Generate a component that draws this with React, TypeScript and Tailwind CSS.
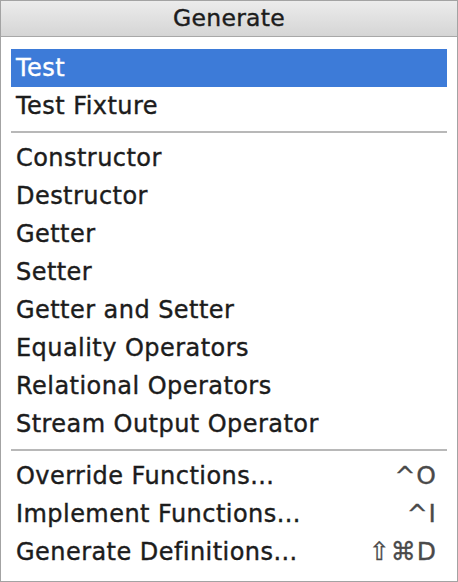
import React from "react";

type Item = { label: string; shortcut?: string; selected?: boolean };

const groups: Item[][] = [
  [{ label: "Test", selected: true }, { label: "Test Fixture" }],
  [
    { label: "Constructor" },
    { label: "Destructor" },
    { label: "Getter" },
    { label: "Setter" },
    { label: "Getter and Setter" },
    { label: "Equality Operators" },
    { label: "Relational Operators" },
    { label: "Stream Output Operator" },
  ],
  [
    { label: "Override Functions...", shortcut: "^O" },
    { label: "Implement Functions...", shortcut: "^I" },
    { label: "Generate Definitions...", shortcut: "⇧⌘D" },
  ],
];

function Row({ item }: { item: Item }) {
  return (
    <div
      className={
        item.selected
          ? "flex h-[38px] items-center justify-between bg-[#3d7bd8] pl-[5px] pr-[10px] text-white"
          : "flex h-[38px] items-center justify-between pl-[5px] pr-[10px] text-[#1c1c1c]"
      }
    >
      <span className="tracking-[0.45px] [-webkit-text-stroke:0.4px]">{item.label}</span>
      {item.shortcut && (
        <span className="text-[25px] tracking-[1px] text-[#4a4a4a] [-webkit-text-stroke:0.3px]">
          {item.shortcut}
        </span>
      )}
    </div>
  );
}

export default function App() {
  return (
    <div
      className="flex h-[582px] w-[458px] flex-col border border-[#a3a3a3] bg-white"
      style={{ fontFamily: '"DejaVu Sans", sans-serif' }}
    >
      <div className="flex h-[36px] shrink-0 items-center justify-center border-b border-[#a8a8a8] bg-gradient-to-b from-[#ececec] to-[#d5d5d5] text-[23.5px] tracking-[0.3px] text-[#1c1c1c] [-webkit-text-stroke:0.4px]">
        Generate
      </div>
      <div className="flex flex-col px-[10px] pt-[12px] text-[24px]">
        {groups.map((g, gi) => (
          <React.Fragment key={gi}>
            {gi > 0 && (
              <div className="flex h-[14px] items-center">
                <div className="h-[2px] w-full bg-[#b8b8b8]" />
              </div>
            )}
            {g.map((it) => (
              <Row key={it.label} item={it} />
            ))}
          </React.Fragment>
        ))}
      </div>
    </div>
  );
}
